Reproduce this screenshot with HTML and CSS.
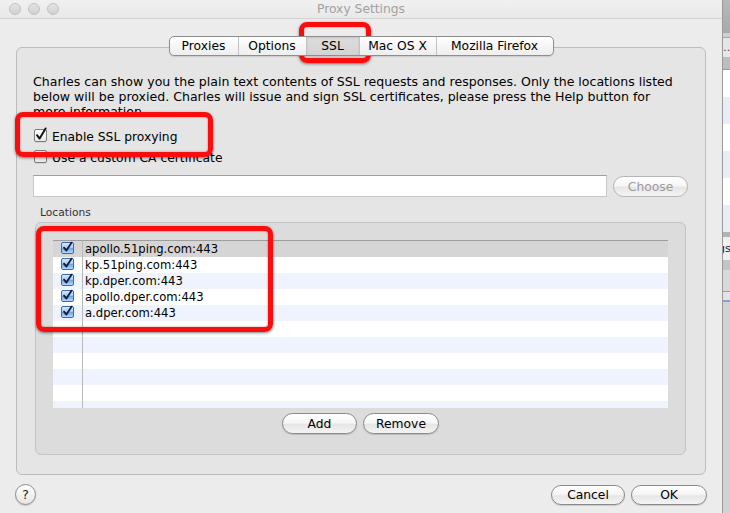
FILE: index.html
```html
<!DOCTYPE html>
<html>
<head>
<meta charset="utf-8">
<title>Proxy Settings</title>
<link rel="stylesheet" href="styles.css">
</head>
<body>
<div class="screen">
  <div class="window">
    <div class="titlebar">
      <div class="lights"><span></span><span></span><span></span></div>
      <div class="title">Proxy Settings</div>
      <div></div>
    </div>
    <div class="main">
      <div class="tabs">
        <span class="seg seg-proxies">Proxies</span>
        <span class="seg seg-options">Options</span>
        <span class="seg seg-ssl active">SSL</span>
        <span class="seg seg-mac">Mac OS X</span>
        <span class="seg seg-firefox">Mozilla Firefox</span>
      </div>
      <div class="panel">
        <p class="desc">Charles can show you the plain text contents of SSL requests and responses. Only the locations listed below will be proxied. Charles will issue and sign SSL certificates, please press the Help button for more information.</p>
        <div class="check-row first">
          <span class="cb"><svg width="14" height="16" viewBox="0 0 14 16"><path d="M3 9.2 L5.6 12.6 L11.6 2.4" fill="none" stroke="#111" stroke-width="1.9" stroke-linecap="round" stroke-linejoin="round"/></svg></span>
          <span class="cb-label">Enable SSL proxying</span>
        </div>
        <div class="check-row">
          <span class="cb"></span>
          <span class="cb-label">Use a custom CA certificate</span>
        </div>
        <div class="file-row">
          <div class="field"></div>
          <button class="btn btn-choose" disabled>Choose</button>
        </div>
        <div class="group-label">Locations</div>
        <div class="group">
          <div class="table">
            <div class="row sel"><span class="c1"><span class="acb"><svg width="13" height="13" viewBox="0 0 13 13"><path d="M3 6.6 L5.4 9.6 L10.6 1.6" fill="none" stroke="#0d1c3d" stroke-width="1.8" stroke-linecap="round" stroke-linejoin="round"/></svg></span></span><span class="c2">apollo.51ping.com:443</span></div>
            <div class="row"><span class="c1"><span class="acb"><svg width="13" height="13" viewBox="0 0 13 13"><path d="M3 6.6 L5.4 9.6 L10.6 1.6" fill="none" stroke="#0d1c3d" stroke-width="1.8" stroke-linecap="round" stroke-linejoin="round"/></svg></span></span><span class="c2">kp.51ping.com:443</span></div>
            <div class="row alt"><span class="c1"><span class="acb"><svg width="13" height="13" viewBox="0 0 13 13"><path d="M3 6.6 L5.4 9.6 L10.6 1.6" fill="none" stroke="#0d1c3d" stroke-width="1.8" stroke-linecap="round" stroke-linejoin="round"/></svg></span></span><span class="c2">kp.dper.com:443</span></div>
            <div class="row"><span class="c1"><span class="acb"><svg width="13" height="13" viewBox="0 0 13 13"><path d="M3 6.6 L5.4 9.6 L10.6 1.6" fill="none" stroke="#0d1c3d" stroke-width="1.8" stroke-linecap="round" stroke-linejoin="round"/></svg></span></span><span class="c2">apollo.dper.com:443</span></div>
            <div class="row alt"><span class="c1"><span class="acb"><svg width="13" height="13" viewBox="0 0 13 13"><path d="M3 6.6 L5.4 9.6 L10.6 1.6" fill="none" stroke="#0d1c3d" stroke-width="1.8" stroke-linecap="round" stroke-linejoin="round"/></svg></span></span><span class="c2">a.dper.com:443</span></div>
            <div class="row"><span class="c1"></span><span class="c2"></span></div>
            <div class="row alt"><span class="c1"></span><span class="c2"></span></div>
            <div class="row"><span class="c1"></span><span class="c2"></span></div>
            <div class="row alt"><span class="c1"></span><span class="c2"></span></div>
            <div class="row"><span class="c1"></span><span class="c2"></span></div>
            <div class="row alt"><span class="c1"></span><span class="c2"></span></div>
          </div>
          <div class="group-buttons">
            <button class="btn btn-add">Add</button>
            <button class="btn btn-remove">Remove</button>
          </div>
        </div>
      </div>
      <div class="footer">
        <button class="help">?</button>
        <div class="footer-buttons">
          <button class="btn btn-cancel">Cancel</button>
          <button class="btn btn-ok">OK</button>
        </div>
      </div>
    </div>
    <div class="hl hl-tab"></div>
    <div class="hl hl-ssl"></div>
    <div class="hl hl-list"></div>
  </div>
  <div class="strip">
    <div class="s1"></div>
    <div class="s2"></div>
    <div class="s3">…</div>
    <div class="s4"></div>
    <div class="s5"></div>
    <div class="s6"></div>
    <div class="s5"></div>
    <div class="s6"></div>
    <div class="s5"></div>
    <div class="s6"></div>
    <div class="s7"></div>
    <div class="s8">gs</div>
    <div class="s9"></div>
    <div class="s10"></div>
    <div class="s11"></div>
    <div class="s12"></div>
  </div>
</div>
</body>
</html>
```
FILE: styles.css
```css
* { box-sizing: border-box; }
html, body { margin: 0; padding: 0; }
body {
  width: 730px;
  height: 513px;
  overflow: hidden;
  font-family: "DejaVu Sans", "Liberation Sans", sans-serif;
  font-size: 12.3px;
  color: #000;
  background: #c8c8c8;
}
.screen { display: flex; width: 730px; height: 513px; }
.window {
  position: relative;
  width: 723px;
  height: 513px;
  background: #ececec;
  display: flex;
  flex-direction: column;
  border-right: 1px solid #9a9a9a;
}
.titlebar {
  height: 19px;
  border-bottom: 1px solid #d2d2d2;
  display: grid;
  grid-template-columns: 1fr auto 1fr;
  align-items: center;
  background: linear-gradient(#f0f0f0, #e9e9e9);
}
.lights { display: flex; gap: 7px; padding-left: 9px; }
.lights span {
  width: 12px; height: 12px; border-radius: 50%;
  background: linear-gradient(#e4e4e4, #d0d0d0);
  border: 1px solid #c0c0c0;
}
.title { color: #a2a2a2; font-size: 12.3px; line-height: 18px; }

.main { flex: 1; display: flex; flex-direction: column; padding: 17px 16px 0 16px; }

.tabs {
  align-self: center;
  display: flex;
  height: 20px;
  border: 1px solid #8e8e8e;
  border-radius: 5px;
  background: linear-gradient(#ffffff, #eeeeee);
  margin-bottom: -9px;
  position: relative;
  z-index: 1;
  box-shadow: 0 1px 1px rgba(0,0,0,0.12);
  overflow: hidden;
}
.seg {
  display: flex; align-items: center; justify-content: center;
  height: 100%;
  line-height: 18px;
  border-left: 1px solid #c2c2c2;
  white-space: nowrap;
}
.seg:first-child { border-left: none; }
.seg-proxies { width: 68px; }
.seg-options { width: 68px; }
.seg-ssl { width: 53px; }
.seg-mac { width: 77px; }
.seg-firefox { width: 117px; }
.seg.active { background: linear-gradient(#dcdcdc, #d3d3d3); box-shadow: inset 0 1px 2px rgba(0,0,0,0.12); }

.panel {
  border: 1px solid #bcbcbc;
  border-radius: 6px;
  background: #e5e5e5;
  padding: 26px 17px 19px 16px;
  display: flex;
  flex-direction: column;
}
.desc {
  margin: 0 8px 0 0;
  font-size: 12.55px;
  line-height: 15px;
  height: 39px;
  overflow: hidden;
}
.check-row { display: flex; align-items: flex-start; height: 18px; line-height: 18px; }
.check-row.first { margin-top: 15px; height: 21px; }
.cb {
  position: relative;
  width: 13px; height: 13px;
  margin: 1px 5px 0 1px;
  border: 1px solid #7c7c7c;
  border-radius: 2px;
  background: linear-gradient(#ffffff, #e8e8e8);
  box-shadow: 0 1px 0 rgba(0,0,0,0.08);
}
.cb svg { position: absolute; left: -1px; top: -4px; }
.file-row { display: flex; gap: 6px; margin-top: 8px; height: 22px; }
.field {
  flex: 1;
  background: #fff;
  border: 1px solid #c8c8c8;
  border-top-color: #9f9f9f;
}
.group-label {
  margin-top: 9px;
  line-height: 14px;
  font-size: 10.7px;
  padding-left: 7px;
  color: #333;
}
.group {
  margin: 2px 2px 0 2px;
  border: 1px solid #c4c4c4;
  border-radius: 6px;
  background: #dcdcdc;
  padding: 17px 17px 20px 17px;
}
.table {
  height: 168px;
  border-top: 1px solid #9d9d9d;
  background: #fff;
  overflow: hidden;
  font-size: 11.6px;
}
.row { display: flex; height: 16px; line-height: 16px; background: #fff; }
.row.alt { background: #eef3fd; }
.row.sel { background: #d5d5d5; }
.c1 {
  width: 30px;
  border-right: 1px solid #b9b9b9;
  display: flex; align-items: center; justify-content: center;
}
.c2 { padding-left: 2px; white-space: nowrap; }
.acb {
  position: relative;
  width: 13px; height: 12px;
  margin-top: -2px;
  border: 1px solid #3f68ad;
  border-radius: 2px;
  background: linear-gradient(#d7e8fc 0%, #a8cbf4 45%, #6ea6ea 55%, #b8dafc 100%);
}
.acb svg { position: absolute; left: -1px; top: -2px; }
.group-buttons { display: flex; justify-content: center; gap: 6px; margin-top: 5px; }

.btn {
  height: 21px;
  padding: 0;
  border: 1px solid #8a8a8a;
  border-radius: 11px;
  background: linear-gradient(#ffffff 0%, #f6f6f6 45%, #e6e6e6 55%, #f4f4f4 100%);
  box-shadow: 0 1px 1px rgba(0,0,0,0.15);
  font-family: inherit;
  font-size: 12.3px;
  color: #000;
}
.btn-choose { width: 75px; margin-top: 1px; color: #9b9b9b; border-color: #b5b5b5; box-shadow: none; }
.btn-add { width: 75px; }
.btn-remove { width: 76px; }
.btn-cancel { width: 74px; height: 20px; }
.btn-ok { width: 76px; height: 20px; }

.footer { display: flex; justify-content: space-between; align-items: center; margin: 9px -1px 0 -1px; }
.help {
  width: 21px; height: 21px; padding: 0;
  border-radius: 50%;
  border: 1px solid #8c8c8c;
  background: linear-gradient(#ffffff, #e6e6e6);
  box-shadow: 0 1px 1px rgba(0,0,0,0.15);
  font-family: inherit;
  font-size: 13px;
  color: #222;
  line-height: 19px;
}
.footer-buttons { display: flex; gap: 6px; }

.hl {
  position: absolute;
  border: 5px solid #fb0d0d;
  border-radius: 8px;
  box-shadow: 0 1px 3px rgba(0,0,0,0.5), inset 0 0 2px rgba(120,0,0,0.5);
}
.hl-tab { left: 299px; top: 22px; width: 72px; height: 41px; }
.hl-ssl { left: 15px; top: 112px; width: 198px; height: 45px; }
.hl-list { left: 36px; top: 226px; width: 237px; height: 106px; }

.strip { width: 7px; display: flex; flex-direction: column; font-size: 11px; overflow: hidden; }
.s1 { height: 33px; background: linear-gradient(#b9b9b9, #a9a9a9); }
.s2 { height: 5px; background: #cfcfcf; border-bottom: 1px solid #a8a8a8; }
.s3 { height: 19px; background: #e6e6e6; line-height: 19px; color: #444; }
.s4 { height: 13px; background: #bdbdbd; border-bottom: 1px solid #9a9a9a; }
.s5 { height: 27px; background: #ffffff; }
.s6 { height: 27px; background: #e9eef6; }
.s7 { height: 5px; background: #b3b3b3; }
.s8 { height: 23px; background: #f0f0f0; line-height: 23px; color: #222; margin-left: -5px; padding-left: 0; }
.s9 { height: 10px; background: #c4c4c4; }
.s10 { height: 22px; background: #d9d9d9; border-bottom: 1px solid #9b9b9b; }
.s11 { height: 10px; background: #e4e4e4; border-bottom: 2px solid #7fa5d2; }
.s12 { flex: 1; background: #d2d2d2; }
```
